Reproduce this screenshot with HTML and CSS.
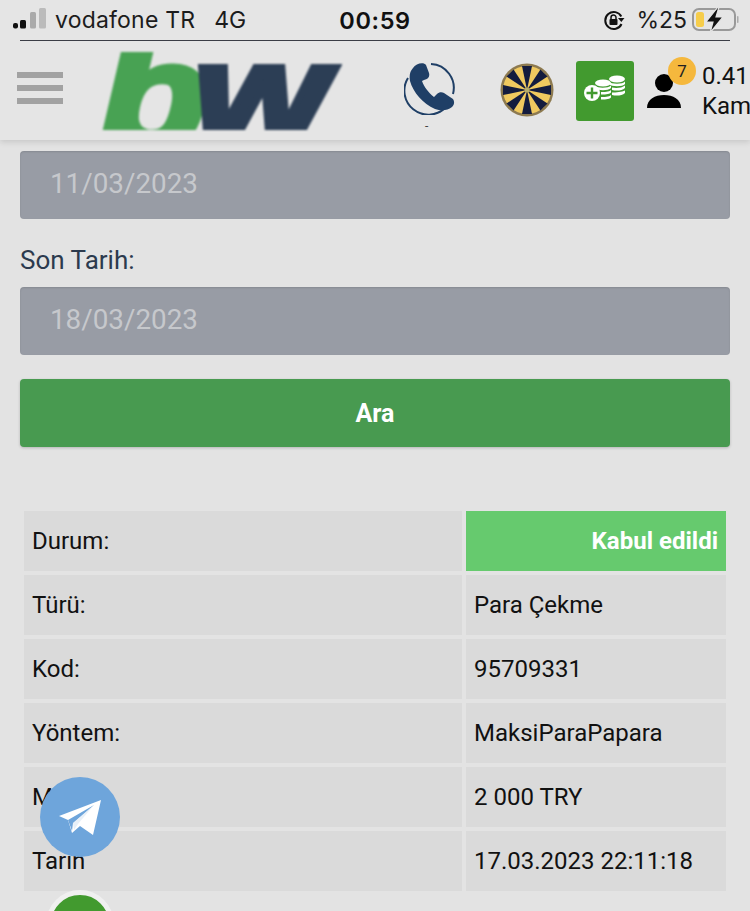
FILE: index.html
```html
<!DOCTYPE html>
<html lang="tr">
<head>
<meta charset="utf-8">
<title>Geçmiş</title>
<link rel="stylesheet" href="styles.css">
</head>
<body>
<div class="screen">
  <header class="header">
    <div class="status">
      <div class="status-left">
        <svg class="signal" width="34" height="24" viewBox="0 0 34 24"><rect x="0" y="15" width="5" height="5.500" rx="2" fill="#111"/><rect x="7" y="12" width="6" height="8.500" rx="1.500" fill="#111"/><rect x="17" y="4" width="6" height="16.500" rx="1.500" fill="#aaa"/><rect x="26" y="0" width="7" height="20.500" rx="1.500" fill="#bbb"/></svg>
        <span class="carrier">vodafone TR</span>
        <span class="net">4G</span>
      </div>
      <div class="time">00:59</div>
      <div class="status-right">
        <svg class="lock" width="22" height="22" viewBox="0 0 22 22"><path d="M18.300 7.500A8.500 8.500 0 1 0 18.500 15" fill="none" stroke="#111" stroke-width="2"/><path d="M15 9h6.500l-3.200 4z" fill="#111"/><rect x="6.500" y="10" width="8" height="6" rx="1" fill="#111"/><path d="M8 10V8.500a2.500 2.500 0 0 1 5 0V10" fill="none" stroke="#111" stroke-width="1.500"/></svg>
        <span class="pct">%25</span>
        <svg class="battery" width="48" height="26" viewBox="0 0 48 26"><rect x="1" y="2" width="42" height="21" rx="6" fill="none" stroke="#999" stroke-width="2"/><rect x="4" y="5" width="8" height="15" rx="2.500" fill="#f6cd4b"/><rect x="45" y="9" width="1.500" height="7" rx=".7" fill="#aaa"/><path d="M26 0 14 15h7l-3 11 13-16h-7l3-10z" fill="#111" stroke="#e5e5e5" stroke-width="1.200"/></svg>
      </div>
    </div>
    <nav class="nav">
      <div class="burger"><i></i><i></i><i></i></div>
      <div class="logo"><span class="logo-b">b</span><span class="logo-w">w</span></div>
      <div class="icon-phone">
        <svg width="52" height="52" viewBox="0 0 52 52"><path d="M27 1A24 24 0 0 1 49 31" fill="none" stroke="#1f3f66" stroke-width="2"/><path d="M4 15A24 24 0 0 0 41 45" fill="none" stroke="#1f3f66" stroke-width="2"/><path d="M9 5C12 0 20-1 22 2L25 10C26 14 24 16 20 17L18 18C20 24 25 30 30 34L33 31C35 29 38 29 40 30L49 36C51 39 50 42 48 44 43 48 37 48 31 46 19 41 9 29 6 18 5 13 6 8 9 5Z" fill="#1f3f66"/></svg>
        <span class="dash">-</span>
      </div>
      <svg class="wheel" width="54" height="54" viewBox="0 0 54 54">
        <circle cx="27" cy="27" r="26.500" fill="#8d7a50"/>
        <circle cx="27" cy="27" r="24" fill="#f0c95f"/>
        <g fill="#141c3e">
          <path d="M27 27 22 3h10z"/>
          <path d="M27 27 22 3h10z" transform="rotate(45 27 27)"/>
          <path d="M27 27 22 3h10z" transform="rotate(90 27 27)"/>
          <path d="M27 27 22 3h10z" transform="rotate(135 27 27)"/>
          <path d="M27 27 22 3h10z" transform="rotate(180 27 27)"/>
          <path d="M27 27 22 3h10z" transform="rotate(225 27 27)"/>
          <path d="M27 27 22 3h10z" transform="rotate(270 27 27)"/>
          <path d="M27 27 22 3h10z" transform="rotate(315 27 27)"/>
        </g>
        <circle cx="27" cy="27" r="2.500" fill="#b7ad6a"/>
      </svg>
      <div class="deposit">
        <svg width="42" height="27" viewBox="0 0 42 27" fill="#fff">
          <ellipse cx="33" cy="4" rx="8" ry="3.500"/><path d="M25 6.500c2 3 14 3 16 0v2.500c-2 3-14 3-16 0zM28 12.500c4 1 10 .5 13-2v2.500c-3 3-9 3-13 2zM28 17.500c4 0 10-.5 13-2v2.500c-3 3-9 3-13 2z"/>
          <ellipse cx="19" cy="8" rx="8" ry="3.500"/><path d="M11 10.500c2 3 13 3 16 0v2.500c-3 3-13 3-16 0zM17 17c3 0 8 0 10-2v2.500c-2 2-7 2-10 2zM17 22c3 0 8 0 10-2v2.500c-2 2-7 2-10 2z"/>
          <circle cx="8" cy="18" r="8"/><path d="M6.800 12.500h2.400v4.300h4.300v2.400H9.200v4.300H6.800v-4.300H2.500v-2.400h4.300z" fill="#429a2f"/>
        </svg>
      </div>
      <div class="user">
        <svg class="person" width="36" height="36" viewBox="0 0 36 36"><circle cx="18" cy="10" r="9" fill="#000"/><path d="M1 35c0-9 8-13 17-13s17 4 17 13z" fill="#000"/></svg>
        <span class="badge">7</span>
      </div>
      <div class="balance"><span>0.41</span><span>Kam</span></div>
    </nav>
  </header>

  <main class="content">
    <div class="date-input">11/03/2023</div>
    <label class="field-label">Son Tarih:</label>
    <div class="date-input">18/03/2023</div>
    <button class="search" type="button">Ara</button>

    <section class="table">
      <div class="cell">Durum:</div><div class="cell status-ok">Kabul edildi</div>
      <div class="cell">Türü:</div><div class="cell">Para Çekme</div>
      <div class="cell">Kod:</div><div class="cell">95709331</div>
      <div class="cell">Yöntem:</div><div class="cell">MaksiParaPapara</div>
      <div class="cell">Miktar:</div><div class="cell">2 000 TRY</div>
      <div class="cell">Tarih</div><div class="cell">17.03.2023 22:11:18</div>
    </section>
  </main>

  <a class="telegram">
    <svg width="44" height="36" viewBox="0 0 44 36"><path d="M43 1 35 36 22 27l-8 7-4-13L1 17z" fill="#fff"/><path d="M10 21 36 6 15 24l-1 8z" fill="#6ea5db"/><path d="M15 24 36 6 20 25l-4 6z" fill="#d9e6f4" opacity=".6"/></svg>
  </a>
  <div class="whatsapp"></div>
</div>
</body>
</html>
```
FILE: styles.css
```css
* { box-sizing: border-box; }
html, body { margin: 0; height: 100%; }
body { background: #e3e3e3; font-family: Roboto, "Liberation Sans", sans-serif; color: #111; overflow: hidden; }
.screen { position: relative; width: 750px; height: 911px; overflow: hidden; }

.header { height: 140px; background: #e5e5e5; box-shadow: 0 2px 6px rgba(0,0,0,.13); position: relative; z-index: 2; }
.status { height: 41px; margin: 0 20px; border-bottom: 1px solid #3a3d45; display: grid; grid-template-columns: 1fr auto 1fr; align-items: center; }
.status-left { display: flex; align-items: center; margin-left: -7px; }
.signal { margin-right: 8px; }
.carrier, .net, .pct { font-family: Inter, "Liberation Sans", sans-serif; font-size: 23px; color: #1c1c1c; }
.carrier { letter-spacing: .2px; }
.net { margin-left: 19px; }
.time { font-family: Inter, "Liberation Sans", sans-serif; font-size: 23.500px; font-weight: 600; letter-spacing: .6px; color: #111; }
.status-right { display: flex; align-items: center; justify-content: flex-end; margin-right: -10px; }
.lock { margin-right: 11px; }
.pct { margin-right: 5px; }

.nav { height: 99px; display: flex; align-items: flex-start; }
.burger { width: 46px; margin: 31px 0 0 17px; display: flex; flex-direction: column; gap: 7px; flex: none; }
.burger i { display: block; height: 6px; background: #a2a2a2; }
.logo { width: 246px; height: 78px; margin: 11px 0 0 37px; overflow: hidden; display: flex; flex: none; font-family: "Liberation Sans", sans-serif; font-weight: 700; font-style: italic; font-size: 145px; line-height: 78px; filter: blur(1px); }
.logo-b, .logo-w { display: block; position: relative; transform-origin: left center; }
.logo-b { top: 4px; color: #48a253; -webkit-text-stroke: 7px #48a253; transform: scaleX(1.2); }
.logo-w { top: 3px; color: #2c3e55; -webkit-text-stroke: 7px #2c3e55; margin-left: 5px; transform: scaleX(1.18); }
.icon-phone { position: relative; width: 52px; height: 52px; margin: 22px 0 0 58px; flex: none; }
.icon-phone svg { display: block; }
.dash { position: absolute; left: 21px; top: 56px; font-size: 12px; line-height: 14px; color: #444; }
.wheel { margin: 22px 0 0 44px; flex: none; filter: blur(.5px); }
.deposit { width: 58px; height: 60px; margin: 20px 0 0 22px; background: #429a2f; border-radius: 3px; display: flex; align-items: center; justify-content: center; padding-bottom: 6px; flex: none; }
.user { position: relative; width: 36px; height: 36px; margin: 32px 0 0 12px; flex: none; }
.person { display: block; }
.badge { position: absolute; left: 22px; top: -16px; width: 28px; height: 28px; border-radius: 50%; background: #f5b83d; color: #222; font-size: 17px; line-height: 28px; text-align: center; }
.balance { margin: 20px 0 0 20px; display: flex; flex-direction: column; font-size: 24px; line-height: 30px; color: #111; white-space: nowrap; flex: none; }

.content { padding: 11px 20px 0; display: flex; flex-direction: column; }
.date-input { height: 68px; background: #989ca5; border-radius: 4px; box-shadow: inset 0 1px 2px rgba(0,0,0,.12); padding-left: 30px; font-size: 27.800px; line-height: 66px; color: #c6c8cc; }
.field-label { margin: 25px 0 11px; font-size: 26px; line-height: 32px; color: #2c3a4e; }
.search { margin-top: 24px; height: 68px; border: 0; border-radius: 4px; background: #489a50; color: #fff; font: 700 25px Roboto, sans-serif; box-shadow: 0 1px 3px rgba(0,0,0,.2); }

.table { margin: 64px 4px 0; display: grid; grid-template-columns: 438px 260px; gap: 4px; }
.cell { height: 60px; background: #dadada; padding-left: 8px; font-size: 24px; line-height: 60px; color: #111; }
.status-ok { background: #66ca6e; color: #fff; font-weight: 700; font-size: 24px; text-align: right; padding: 0 8px 0 0; }

.telegram { position: absolute; left: 40px; top: 777px; width: 80px; height: 80px; border-radius: 50%; background: #6ea5db; display: flex; align-items: center; justify-content: center; z-index: 3; }
.telegram svg { margin-right: 1px; }
.whatsapp { position: absolute; left: 46px; top: 890px; width: 68px; height: 68px; border-radius: 50%; background: #429a2f; border: 5px solid #f0f0f0; z-index: 3; }
```
